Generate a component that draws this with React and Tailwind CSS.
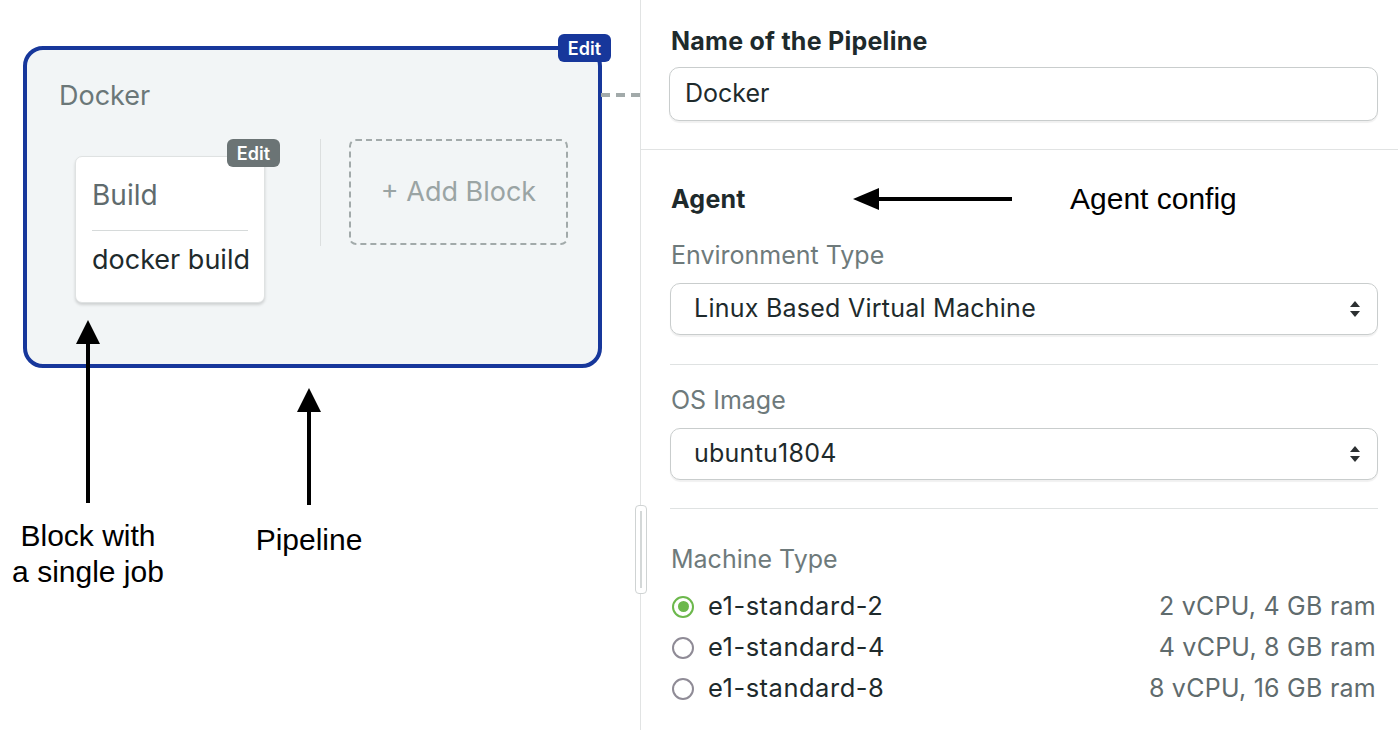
import React from "react";

const ui = { fontFamily: "Inter, 'Noto Sans', sans-serif" };
const note = { fontFamily: "'Liberation Sans', Arial, sans-serif" };

function Updown() {
  return (
    <svg width="12" height="20" viewBox="0 0 12 20" className="shrink-0">
      <path d="M6 2 L11 8 H1 Z" fill="#2b2f31" />
      <path d="M6 18 L11 12 H1 Z" fill="#2b2f31" />
    </svg>
  );
}

function Select({ value }) {
  return (
    <div className="h-[52px] rounded-[10px] border border-[#c9cdcd] bg-white shadow-[0_2px_1px_rgba(0,0,0,0.06)] flex items-center justify-between pl-[23px] pr-[16px]">
      <span className="text-[25px] tracking-[0.01em] text-[#1e2a2c]">{value}</span>
      <Updown />
    </div>
  );
}

function Radio({ checked, label, spec }) {
  return (
    <div className="h-[41px] flex items-center">
      {checked ? (
        <span className="w-[22px] h-[22px] rounded-full border-[2.5px] border-[#6cb84c] flex items-center justify-center">
          <span className="w-[11px] h-[11px] rounded-full bg-[#6cb84c]" />
        </span>
      ) : (
        <span className="w-[22px] h-[22px] rounded-full border-[2px] border-[#8f8b96] bg-white" />
      )}
      <span className="ml-[14px] text-[25.5px] tracking-[0.02em] text-[#1e2a2c]">{label}</span>
      <span className="ml-auto text-[25px] tracking-[0.01em] text-[#5f6b6d]">{spec}</span>
    </div>
  );
}

function Arrow({ length }) {
  return (
    <svg width="26" height={length} viewBox={`0 0 26 ${length}`}>
      <path d="M13 0 L25 24 H1 Z" fill="#000" />
      <rect x="11" y="20" width="4" height={length - 20} fill="#000" />
    </svg>
  );
}

export default function App() {
  return (
    <div className="w-[1398px] h-[730px] bg-white flex overflow-hidden" style={ui}>
      {/* canvas */}
      <div className="relative w-[641px] h-full border-r border-[#e1e3e3] shrink-0">
        <div className="relative ml-[23px] mt-[46px] w-[579px] h-[322px] rounded-[20px] border-[4px] border-[#17379b] bg-[#f2f5f6] pl-[32px] pt-[30px]">
          <div className="absolute -top-[16px] -right-[13px] h-[28px] px-[10px] rounded-[6px] bg-[#17379b] text-white text-[18px] font-semibold flex items-center">
            Edit
          </div>
          <div className="text-[27px] leading-[32px] text-[#6b7778]">Docker</div>
          <div className="flex items-start mt-[27px]">
            <div className="relative ml-[16px] mt-[17px] w-[190px] h-[147px] rounded-[7px] bg-white border border-[#dfe2e2] shadow-[0_2px_3px_rgba(0,0,0,0.15)] px-[16px] pt-[20px]">
              <div className="absolute -top-[18px] -right-[16px] h-[28px] px-[10px] rounded-[6px] bg-[#6b7475] text-white text-[18px] font-semibold flex items-center">
                Edit
              </div>
              <div className="text-[28px] leading-[36px] text-[#5f6b6d]">Build</div>
              <div className="border-t border-[#d6dada] mt-[17px]" />
              <div className="text-[27px] leading-[36px] text-[#1e2a2c] mt-[11px] whitespace-nowrap">docker build</div>
            </div>
            <div className="ml-[55px] w-px h-[107px] bg-[#dcdfdf]" />
            <div className="ml-[28px] w-[219px] h-[106px] rounded-[7px] border-[2px] border-dashed border-[#a2aaaa] flex items-center justify-center text-[27px] text-[#9aa4a4]">
              + Add Block
            </div>
          </div>
        </div>

        {/* dashed connector */}
        <svg width="40" height="6" viewBox="0 0 40 6" className="absolute left-[601px] top-[92px]">
          <line x1="0" y1="3" x2="40" y2="3" stroke="#a2aaaa" strokeWidth="4" strokeDasharray="9 6" />
        </svg>

        {/* annotations */}
        <div className="absolute left-[75px] top-[320px]">
          <Arrow length={183} />
        </div>
        <div className="absolute left-[296px] top-[388px]">
          <Arrow length={117} />
        </div>
        <div className="absolute left-0 top-[518px] w-[176px] text-center text-[30px] leading-[36px] text-black" style={note}>
          Block with
          <br />a single job
        </div>
        <div className="absolute left-[239px] top-[522px] w-[140px] text-center text-[30px] leading-[36px] text-black" style={note}>
          Pipeline
        </div>

        {/* scroll handle */}
        <div className="absolute left-[635px] top-[505px] w-[12px] h-[89px] rounded-[4px] border border-[#cfd3d3] bg-white flex justify-center py-[5px]">
          <div className="w-[2px] h-full bg-[#d4d8d8]" />
        </div>
      </div>

      {/* form */}
      <div className="flex-1 flex flex-col">
        <div className="pl-[30px] pr-[20px] pt-[26px] pb-[28px] border-b border-[#e1e3e3]">
          <div className="text-[25px] leading-[30px] font-bold tracking-[0.01em] text-[#1e2a2c]">Name of the Pipeline</div>
          <div className="-ml-[2px] mt-[11px] h-[54px] rounded-[10px] border border-[#c9cdcd] bg-white shadow-[0_2px_1px_rgba(0,0,0,0.06)] flex items-center pl-[15px]">
            <span className="text-[25px] text-[#1e2a2c]">Docker</span>
          </div>
        </div>

        <div className="pl-[29px] pr-[20px] pt-[35px]">
          <div className="relative flex items-center h-[30px]">
            <span className="ml-[1px] text-[25px] font-bold tracking-[0.01em] text-[#1e2a2c]">Agent</span>
            <svg width="160" height="24" viewBox="0 0 160 24" className="absolute left-[183px] top-[2px]">
              <path d="M0 12 L26 1 V23 Z" fill="#000" />
              <rect x="22" y="10" width="137" height="4" fill="#000" />
            </svg>
            <span className="absolute left-[400px] top-[-4px] text-[30px] leading-[36px] text-black" style={note}>
              Agent config
            </span>
          </div>

          <div className="mt-[25px] ml-[1px] text-[25px] leading-[30px] text-[#6e7a7b]">Environment Type</div>
          <div className="mt-[13px]">
            <Select value="Linux Based Virtual Machine" />
          </div>
          <div className="mt-[29px] border-t border-[#dfe2e2]" />

          <div className="mt-[20px] ml-[1px] text-[25px] leading-[30px] text-[#6e7a7b]">OS Image</div>
          <div className="mt-[13px]">
            <Select value="ubuntu1804" />
          </div>
          <div className="mt-[28px] border-t border-[#dfe2e2]" />

          <div className="mt-[35px] ml-[1px] text-[25px] leading-[30px] text-[#6e7a7b]">Machine Type</div>
          <div className="mt-[12px] pl-[2px] pr-[2px]">
            <Radio checked label="e1-standard-2" spec="2 vCPU, 4 GB ram" />
            <Radio label="e1-standard-4" spec="4 vCPU, 8 GB ram" />
            <Radio label="e1-standard-8" spec="8 vCPU, 16 GB ram" />
          </div>
        </div>
      </div>
    </div>
  );
}
